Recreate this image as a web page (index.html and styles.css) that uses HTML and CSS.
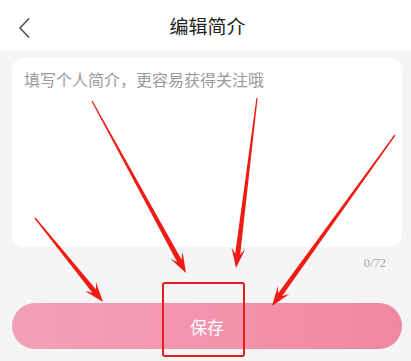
FILE: index.html
```html
<!DOCTYPE html>
<html lang="zh">
<head>
<meta charset="utf-8">
<link rel="stylesheet" href="styles.css">
</head>
<body>
<div class="page">
  <header class="topbar">
    <svg class="back" width="14" height="22" viewBox="0 0 14 22"><path d="M11 1.5 L2 11 L11 20.5" fill="none" stroke="#555" stroke-width="1.6"/></svg>
    <div class="title">编辑简介</div>
  </header>
  <main class="content">
    <div class="card">
      <div class="placeholder">填写个人简介，更容易获得关注哦</div>
    </div>
    <div class="counter">0/72</div>
    <button class="save">保存</button>
  </main>
  <svg class="arrows" width="411" height="361" viewBox="0 0 411 361">
    <g fill="#ee1c14">
      <polygon points="34.5,218.4 92.3,292.7 85.0,290.9 103,302 95.9,282.1 96.1,289.6 35.5,217.6"/>
      <polygon points="91.5,101.3 177.1,261.9 170.3,258.8 186,273 182.6,252.1 181.5,259.5 92.5,100.7"/>
      <polygon points="256.4,97.9 235.2,253.8 231.5,247.3 236,268 245.4,249.0 240.2,254.4 257.6,98.1"/>
      <polygon points="394.5,134.6 278.2,293.2 278.0,285.7 272,306 289.4,293.9 282.2,296.1 395.5,135.4"/>
    </g>
  </svg>
  <div class="highlight"></div>
</div>
</body>
</html>
```
FILE: styles.css
```css
html, body {
  margin: 0;
  padding: 0;
  background: #f5f5f5;
}
.page {
  position: relative;
  width: 411px;
  height: 361px;
  overflow: hidden;
  font-family: "Noto Sans CJK SC", "Noto Sans", sans-serif;
}
.topbar {
  height: 51px;
  background: #fff;
  display: flex;
  align-items: center;
  justify-content: center;
  position: relative;
}
.back {
  position: absolute;
  left: 18px;
  top: 17px;
}
.title {
  font-size: 19px;
  color: #222;
  line-height: 24px;
  margin-left: 4px;
}
.content {
  padding: 7px 9px 0 12px;
  display: flex;
  flex-direction: column;
}
.card {
  height: 189px;
  background: #fff;
  border-radius: 12px;
  padding: 10px 12px;
  box-sizing: border-box;
}
.placeholder {
  font-size: 16px;
  line-height: 22px;
  color: #9a9a9a;
}
.counter {
  align-self: flex-end;
  margin-top: 8px;
  margin-right: 16px;
  font-family: "Liberation Serif", serif;
  font-size: 12.5px;
  line-height: 16px;
  color: #a8a8a8;
}
.save {
  margin-top: 32px;
  height: 46px;
  border: none;
  border-radius: 23px;
  background: linear-gradient(90deg, #f3a1b6 0%, #f294ad 50%, #f1869f 100%);
  color: #fff;
  font-family: "Noto Sans CJK SC", sans-serif;
  font-size: 17px;
  padding: 0;
}
.arrows {
  position: absolute;
  left: 0;
  top: 0;
  pointer-events: none;
}
.highlight {
  position: absolute;
  left: 162px;
  top: 282px;
  width: 79px;
  height: 71px;
  border: 2px solid #e51d1d;
  border-radius: 3px;
}
```
